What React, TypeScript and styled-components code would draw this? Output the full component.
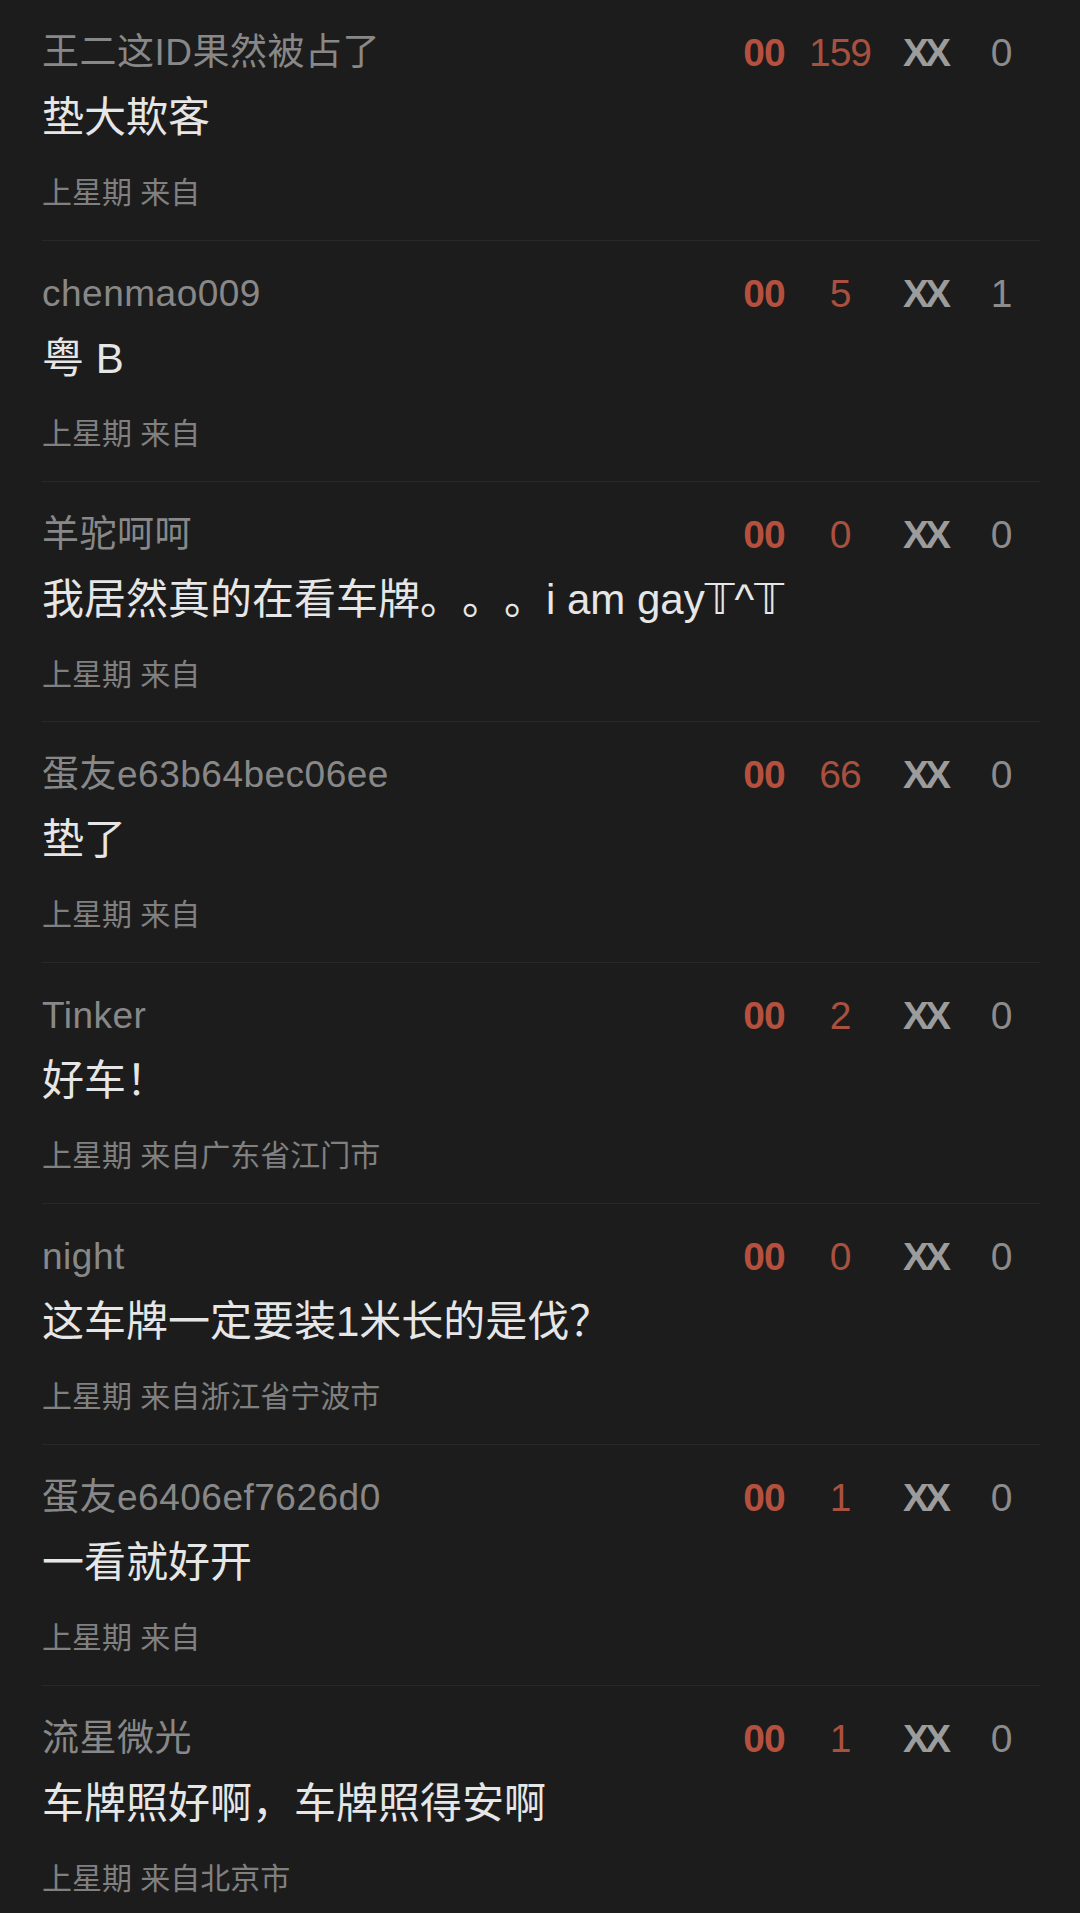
import React from "react";
import styled, { createGlobalStyle } from "styled-components";

const GlobalStyle = createGlobalStyle`
  html, body {
    margin: 0;
    padding: 0;
    background: #1c1c1c;
  }
  body {
    font-family: "Liberation Sans", "Noto Sans CJK SC", "DejaVu Sans", sans-serif;
    -webkit-font-smoothing: antialiased;
    text-spacing-trim: space-all;
  }
`;

const Page = styled.div`
  background: #1c1c1c;
  min-height: 1913px;
  overflow: hidden;
`;

const List = styled.ul`
  list-style: none;
  margin: 0;
  padding: 0 40px 0 42px;
`;

const Item = styled.li`
  display: flex;
  flex-direction: column;
  height: 239.8px;
  box-sizing: content-box;
  padding: 0;
  border-bottom: 1px solid #282828;
`;

const Header = styled.div`
  display: flex;
  align-items: center;
  height: 50px;
  margin-top: 28px;
`;

const Name = styled.span`
  flex: 1;
  font-size: 37px;
  line-height: 50px;
  letter-spacing: 0.5px;
  color: #888888;
  white-space: nowrap;
`;

const Stats = styled.div`
  display: grid;
  grid-template-columns: 48px 104px 70px 78px;
  align-items: center;
  font-size: 39px;
  line-height: 50px;
  text-align: center;
`;

const Stat = styled.span<{ $tone: "red" | "gray"; $bold?: boolean; $tight?: boolean }>`
  color: ${(p) =>
    p.$tone === "red" ? (p.$bold ? "#b5503f" : "#a9503f") : p.$bold ? "#9c9c9c" : "#8c8c8c"};
  font-weight: ${(p) => (p.$bold ? 700 : 400)};
  letter-spacing: ${(p) => (p.$tight ? "-4px" : "-1px")};
  text-indent: ${(p) => (p.$tight ? "-4px" : "0")};
`;

const Content = styled.div`
  margin-top: 15px;
  font-size: 42px;
  line-height: 50px;
  color: #e6e6e6;
  white-space: nowrap;
`;

const Meta = styled.div`
  margin-top: 30px;
  font-size: 30px;
  line-height: 40px;
  color: #808080;
  white-space: nowrap;
`;

type Comment = {
  name: string;
  text: string;
  meta: string;
  likes: number;
  dislikes: number;
};

const comments: Comment[] = [
  { name: "王二这ID果然被占了", text: "垫大欺客", meta: "上星期 来自", likes: 159, dislikes: 0 },
  { name: "chenmao009", text: "粤 B", meta: "上星期 来自", likes: 5, dislikes: 1 },
  { name: "羊驼呵呵", text: "我居然真的在看车牌。。。i am gay𝕋^𝕋", meta: "上星期 来自", likes: 0, dislikes: 0 },
  { name: "蛋友e63b64bec06ee", text: "垫了", meta: "上星期 来自", likes: 66, dislikes: 0 },
  { name: "Tinker", text: "好车！", meta: "上星期 来自广东省江门市", likes: 2, dislikes: 0 },
  { name: "night", text: "这车牌一定要装1米长的是伐？", meta: "上星期 来自浙江省宁波市", likes: 0, dislikes: 0 },
  { name: "蛋友e6406ef7626d0", text: "一看就好开", meta: "上星期 来自", likes: 1, dislikes: 0 },
  { name: "流星微光", text: "车牌照好啊，车牌照得安啊", meta: "上星期 来自北京市", likes: 1, dislikes: 0 },
];

export default function App() {
  return (
    <Page>
      <GlobalStyle />
      <List>
        {comments.map((c, i) => (
          <Item key={i}>
            <Header>
              <Name>{c.name}</Name>
              <Stats>
                <Stat $tone="red" $bold>00</Stat>
                <Stat $tone="red">{c.likes}</Stat>
                <Stat $tone="gray" $bold $tight>XX</Stat>
                <Stat $tone="gray">{c.dislikes}</Stat>
              </Stats>
            </Header>
            <Content>{c.text}</Content>
            <Meta>{c.meta}</Meta>
          </Item>
        ))}
      </List>
    </Page>
  );
}
